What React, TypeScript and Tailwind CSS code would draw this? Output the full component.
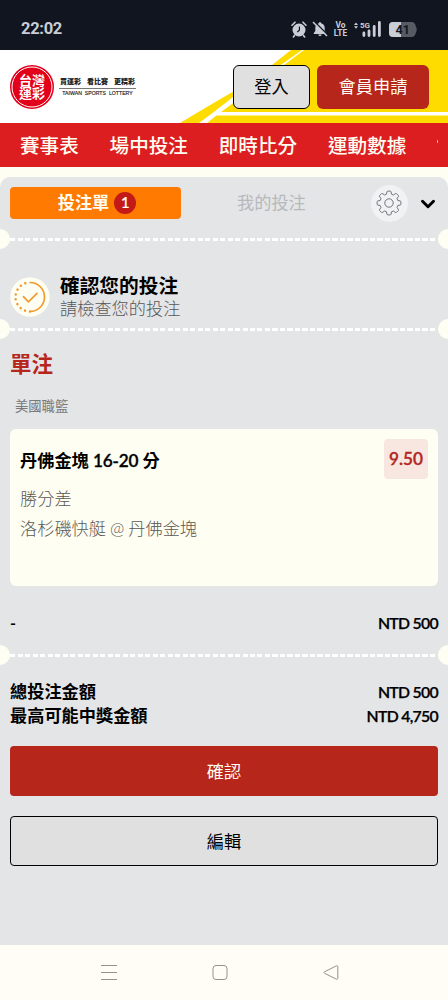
import React from "react";
import { LuChevronDown } from "react-icons/lu";

const navItems = ["賽事表", "場中投注", "即時比分", "運動數據"];

// eight-tooth outline used by the settings button
const gearPath = () => {
  const points: string[] = [];
  for (let i = 0; i < 8; i++) {
    const base = (i * Math.PI) / 4 - Math.PI / 2;
    [
      [-0.27, 9.2],
      [-0.19, 11.3],
      [-0.12, 12],
      [0.12, 12],
      [0.19, 11.3],
      [0.27, 9.2],
    ].forEach(([offset, radius]) => {
      const x = 13 + radius * Math.cos(base + offset);
      const y = 13 + radius * Math.sin(base + offset);
      points.push(`${x.toFixed(2)} ${y.toFixed(2)}`);
    });
  }
  return `M${points.join("L")}Z`;
};

const StatusBar = () => (
  <div className="h-[50px] bg-[#11151f] flex items-center justify-between pl-[21px] pr-[31px] pt-2 text-[#c9cdd5]">
    <span className="font-['Roboto'] text-[16.5px] font-bold leading-none tracking-[-0.3px]">
      22:02
    </span>
    <div className="flex items-center">
      <svg className="w-4 h-[17px]" viewBox="0 0 16 17">
        <circle cx="8" cy="9" r="6.5" fill="currentColor" />
        <path
          d="M1 4.2 4 1.2M15 4.2 12 1.2M3.5 14.5 2.4 16M12.5 14.5l1.1 1.5"
          stroke="currentColor"
          strokeWidth="1.6"
          strokeLinecap="round"
        />
        <path d="M8.4 5.5v3.7L6.3 11" fill="none" stroke="#11151f" strokeWidth="1.2" />
      </svg>
      <svg className="w-4 h-4 ml-[5px]" viewBox="0 0 16 16">
        <path
          d="M8 1.2c.8 0 1.2.5 1.2 1.1C11.6 2.9 12.7 4.6 12.7 7v3l1.5 2v.9H1.8V12l1.5-2V7C3.3 4.6 4.4 2.9 6.8 2.3 6.8 1.7 7.2 1.2 8 1.2ZM6.3 13.6h3.4c-.2 1.1-.9 1.6-1.7 1.6s-1.5-.5-1.7-1.6Z"
          fill="currentColor"
        />
        <path d="M2 .2 16 14.2" stroke="#11151f" strokeWidth="1.5" />
        <path d="M1 1l14 14" stroke="currentColor" strokeWidth="1.5" />
      </svg>
      <div className="ml-[5px] w-[15px] text-center font-['Roboto'] text-[8.4px] font-bold leading-[8px]">
        Vo
        <br />
        LTE
      </div>
      <svg className="w-[28px] h-[17px] ml-[6px]" viewBox="0 0 28 17">
        <path d="M0 4 2 1.5 4 4ZM0 5.3 2 7.8 4 5.3Z" fill="currentColor" />
        <text x="6" y="6.8" fontSize="8" fontWeight="700" fontFamily="Roboto" fill="currentColor">
          5G
        </text>
        <path
          d="M9.9 12v2.5M15 10v4.5M20.2 5.5v9M25.4 1.5v13"
          stroke="currentColor"
          strokeWidth="2.8"
          strokeLinecap="round"
        />
      </svg>
      <svg className="w-[28px] h-[15px] ml-[7px]" viewBox="0 0 28 15">
        <path
          d="M4 0H23Q25 0 26 2L27.5 6Q28 7.5 27.5 9L26 13Q25 15 23 15H4Q0 15 0 11V4Q0 0 4 0Z"
          fill="#575b64"
        />
        <path d="M4 0H12V15H4Q0 15 0 11V4Q0 0 4 0Z" fill="#c9cdd5" />
        <text x="6.5" y="12" fontSize="12.5" fontWeight="700" fontFamily="Roboto" fill="#11151f">
          41
        </text>
      </svg>
    </div>
  </div>
);

const Logo = () => (
  <div className="flex items-center">
    <svg className="w-11 h-11" viewBox="0 0 44 44">
      <circle cx="22" cy="22" r="22" fill="#e2001a" />
      <circle cx="22" cy="22" r="20" fill="none" stroke="#fff" strokeWidth="1" />
      <text
        fill="#fff"
        fontSize="13"
        fontWeight="700"
        fontFamily="'Noto Sans CJK TC', sans-serif"
        textAnchor="middle"
      >
        <tspan x="22" y="19.5">
          台灣
        </tspan>
        <tspan x="22" y="33">
          運彩
        </tspan>
      </text>
    </svg>
    <div className="ml-[5px] w-[77px] flex flex-col items-center text-[#222]">
      <div className="w-full flex justify-between px-px text-[7px] font-black leading-[11px]">
        <span>買運彩</span>
        <span>看比賽</span>
        <span>更精彩</span>
      </div>
      <div className="w-full h-px bg-[#777] mt-px" />
      <span className="mt-px font-['Liberation_Sans'] text-[5.2px] leading-[7px] whitespace-pre [-webkit-text-stroke:0.15px_#222]">
        TAIWAN  SPORTS  LOTTERY
      </span>
    </div>
  </div>
);

const Header = () => (
  <header className="relative h-[73px] bg-white flex items-center justify-between pl-[10px] pr-[19px]">
    <svg className="absolute inset-0 w-full h-full" viewBox="0 0 448 73">
      <path d="M180 73Q208 56 233 41.7Q255 26 272 15L291 0H448V73Z" fill="#fedc00" />
      <path
        d="M199 73Q218 59 233 47L285 12L302 0H304L286 13.5L236 51L221 62H448V65.5H216.5L207 73Z"
        fill="#fff"
      />
    </svg>
    <div className="relative">
      <Logo />
    </div>
    <div className="relative flex gap-[7px]">
      <button className="w-[77px] h-11 rounded-md border border-black bg-[#e0e0e0] text-[17.2px] text-black">
        登入
      </button>
      <button className="w-[112px] h-11 rounded-md bg-[#b6261b] text-[17.2px] text-[#fffdf2]">
        會員申請
      </button>
    </div>
  </header>
);

const NavBar = () => (
  <nav className="h-11 pt-px bg-[#dc1e20] flex items-center gap-[30.8px] pl-5 overflow-hidden whitespace-nowrap">
    {navItems.map((item) => (
      <span key={item} className="text-[19.6px] font-medium leading-none text-[#fffdf2]">
        {item}
      </span>
    ))}
    <span className="w-px h-[3px] mb-2 bg-[#f3a9a4]" />
  </nav>
);

// ticket perforation with a notch on each side
const Perforation = () => (
  <div className="h-5 flex items-center">
    <div className="w-[10px] h-5 rounded-r-full bg-[#fffef3]" />
    <div className="flex-1 h-[3px] mt-px bg-[repeating-linear-gradient(90deg,#fff_0px,#fff_5px,transparent_5px,transparent_7.5px)]" />
    <div className="w-[10px] h-5 rounded-l-full bg-[#fffef3]" />
  </div>
);

const BetTabs = () => (
  <div className="h-[52px] flex items-center pl-[10px] whitespace-nowrap">
    <div className="w-[171px] h-8 shrink-0 rounded bg-[#ff7a00] flex items-center justify-center gap-[5px] pl-[3px]">
      <span className="text-[17.2px] font-bold leading-none text-[#fffdf2]">投注單</span>
      <span className="w-[22px] h-[22px] rounded-full bg-[#c31917] flex items-center justify-center text-[15.5px] font-semibold leading-none text-[#fffdf2]">
        1
      </span>
    </div>
    <span className="ml-[56px] text-[17.2px] leading-none text-[#b6b9bc]">我的投注</span>
    <div className="ml-[65px] w-[37px] h-[37px] shrink-0 rounded-full bg-[#f1f2f4] flex items-center justify-center">
      <svg className="w-[26px] h-[26px]" viewBox="0 0 26 26" fill="none" stroke="#63666b">
        <path d={gearPath()} strokeLinejoin="round" strokeWidth="0.9" />
        <circle cx="13" cy="13" r="4.2" strokeWidth="0.9" />
      </svg>
    </div>
    <LuChevronDown className="ml-[9px] mt-[2px] w-[22px] h-[22px] shrink-0 text-black" strokeWidth={3.2} />
  </div>
);

const ConfirmNotice = () => (
  <div className="h-[70px] pt-[25px] pl-[10px] flex items-start">
    <svg className="w-10 h-10 mt-[3px]" viewBox="0 0 40 40">
      <circle cx="20" cy="20" r="19.7" fill="#fffef3" />
      <g fill="none" stroke="#f29a2e" strokeLinecap="round">
        <path d="M20 5.5a14.5 14.5 0 0 1 0 29" strokeWidth="1.7" />
        <path
          d="M20 34.5a14.5 14.5 0 0 1 0-29"
          strokeWidth="2.5"
          strokeDasharray="0.01 5.05"
        />
        <path d="M13.5 19.7 18.4 24.8 27 16.4" strokeWidth="1.8" />
      </g>
    </svg>
    <div className="ml-[10px]">
      <h2 className="text-[19.7px] font-bold leading-6 text-black">確認您的投注</h2>
      <p className="text-[17.2px] font-light leading-[22px] text-[#55585b]">請檢查您的投注</p>
    </div>
  </div>
);

const BetCard = () => (
  <div className="mx-[10px] h-[157px] rounded-md bg-[#fffef3] flex justify-between p-[10px]">
    <div className="pt-[10px]">
      <h4 className="text-[17.2px] font-bold leading-6 text-black">
        丹佛金塊{" "}
        <span className="font-semibold tracking-[-0.2px] [-webkit-text-stroke:0.3px_#000]">16-20</span> 分
      </h4>
      <p className="mt-[11px] text-[17.2px] font-light leading-[30px] text-[#585754]">勝分差</p>
      <p className="text-[17.2px] font-light leading-[29px] text-[#585754] [word-spacing:-0.6px]">
        洛杉磯快艇 @ 丹佛金塊
      </p>
    </div>
    <div className="w-11 h-10 rounded bg-[#f7e7e0] flex items-center justify-center text-[17.2px] font-semibold text-[#b3261e] [-webkit-text-stroke:0.3px_#b3261e]">
      9.50
    </div>
  </div>
);

const Amount = ({ children }: { children: React.ReactNode }) => (
  <span className="text-[15.8px] font-semibold tracking-[-0.7px] [-webkit-text-stroke:0.25px_#000]">
    {children}
  </span>
);

const SystemNav = () => (
  <div className="h-[55px] bg-[#fffdf5] flex justify-between pl-[101px] pr-[109px] pt-5">
    <svg className="w-4 h-4" viewBox="0 0 16 16" stroke="#95918c" strokeWidth="1">
      <path d="M0 .5h16M0 7.5h16M0 14.5h16" />
    </svg>
    <svg className="w-4 h-4" viewBox="0 0 16 16" fill="none" stroke="#95918c">
      <rect x="1" y=".5" width="14" height="14" rx="3" />
    </svg>
    <svg className="w-4 h-4" viewBox="0 0 16 16" fill="none" stroke="#95918c">
      <path d="M1.5 6.8 13.5.8Q14.8.5 14.8 1.5V13.5Q14.8 14.5 13.5 14.2L1.5 8.3Q.5 7.5 1.5 6.8Z" />
    </svg>
  </div>
);

const App = () => {
  return (
    <div className="w-[448px] h-[1000px] flex flex-col overflow-hidden bg-[#fffef3] font-['Lato','Noto_Sans_CJK_TC',sans-serif]">
      <StatusBar />
      <Header />
      <NavBar />
      <main className="mt-[10px] flex-1 rounded-t-[10px] bg-[#e4e5e7]">
        <BetTabs />
        <Perforation />
        <ConfirmNotice />
        <Perforation />

        <h3 className="mt-[10px] ml-[10px] text-[21.5px] font-bold leading-[30px] text-[#b6261b]">
          單注
        </h3>
        <p className="mt-[17px] mb-[13px] ml-[15px] text-[13.3px] leading-5 text-[#77797c]">
          美國職籃
        </p>
        <BetCard />
        <div className="h-[59px] px-[10px] pt-[26px] flex justify-between leading-[22px] text-black">
          <span className="font-bold">-</span>
          <Amount>NTD 500</Amount>
        </div>
        <Perforation />
        <div className="px-[10px] pt-[15px] text-black leading-6">
          <div className="flex justify-between">
            <span className="text-[17.2px] font-bold">總投注金額</span>
            <Amount>NTD 500</Amount>
          </div>
          <div className="flex justify-between">
            <span className="text-[17.2px] font-bold">最高可能中獎金額</span>
            <Amount>NTD 4,750</Amount>
          </div>
        </div>
        <div className="px-[10px] pt-[18px] flex flex-col gap-5">
          <button className="h-[50px] pt-px rounded bg-[#b6261b] text-[17.2px] text-[#fffdf2]">確認</button>
          <button className="h-[50px] pt-px rounded border border-black bg-[#e0e0e0] text-[17.2px] text-black">
            編輯
          </button>
        </div>
      </main>
      <SystemNav />
    </div>
  );
};

export default App;
